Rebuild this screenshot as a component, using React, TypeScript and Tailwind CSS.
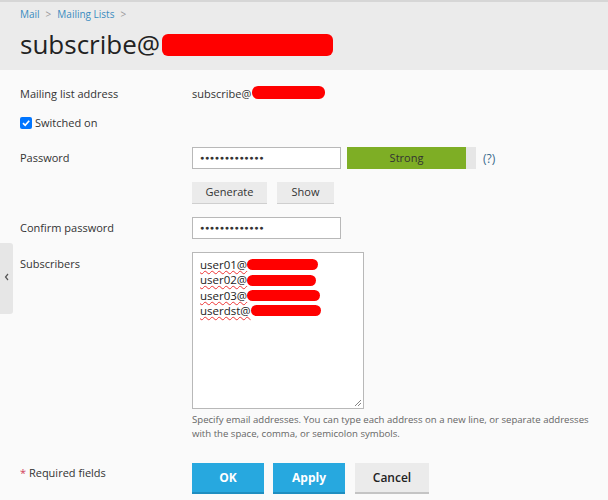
import React from "react";

const Redact = ({ className }: { className: string }) => (
  <span className={`inline-block bg-[#ff0000] rounded-[6px] align-middle ${className}`} />
);

export default function App() {
  const font = { fontFamily: '"Open Sans", "Liberation Sans", sans-serif' };
  return (
    <div className="w-[608px] h-[500px] bg-[#fafafa] text-[#333] relative overflow-hidden" style={font}>
      {/* page header */}
      <div className="h-[70px] bg-[#ebebeb] border-t-2 border-[#d6d6d6] pl-5 pt-[5px]">
        <div className="flex items-center text-[10px] text-[#3a8cc0] h-[14px]">
          <span>Mail</span>
          <span className="mx-[6px] text-[#999] text-[10px]">&gt;</span>
          <span>Mailing Lists</span>
          <span className="mx-[6px] text-[#999] text-[10px]">&gt;</span>
        </div>
        <div className="flex items-center mt-[7px] h-[32px]">
          <span className="text-[26px] leading-[32px] text-[#222]">subscribe@</span>
          <Redact className="w-[171px] h-[22px] ml-[2px] mt-[2px]" />
        </div>
      </div>

      {/* collapse tab */}
      <div className="absolute left-0 top-[243px] w-[13px] h-[71px] bg-[#e6e6e6] rounded-r-[3px] flex items-center justify-center">
        <svg width="6" height="8" viewBox="0 0 6 8" className="mt-[-4px]">
          <path d="M4 1 L1.5 4 L4 7" stroke="#555" strokeWidth="1.2" fill="none" />
        </svg>
      </div>

      <div className="pl-5 text-[11px]">
        <div className="flex items-center h-[18px] mt-[15px]">
          <div className="w-[172px]">Mailing list address</div>
          <div className="flex items-center">
            <span>subscribe@</span>
            <Redact className="w-[73px] h-[13px] ml-[1px] mt-[-4px]" />
          </div>
        </div>

        <div className="flex items-center h-[18px] mt-[11px]">
          <span className="w-[12px] h-[12px] rounded-[2px] bg-[#0075ff] flex items-center justify-center">
            <svg width="10" height="10" viewBox="0 0 10 10">
              <path d="M2 5.2 L4.2 7.3 L8.2 2.8" stroke="#fff" strokeWidth="1.7" fill="none" />
            </svg>
          </span>
          <span className="ml-[3px]">Switched on</span>
        </div>

        <div className="flex items-center h-[22px] mt-[15px]">
          <div className="w-[172px]">Password</div>
          <div className="w-[149px] h-[22px] border border-[#b8b8b8] bg-white flex items-center px-[7px] text-[7px] tracking-[0.7px]">
            ●●●●●●●●●●●●●
          </div>
          <div className="ml-[6px] w-[129px] h-[22px] bg-[#e6e6e6] flex">
            <div className="w-[119px] h-full bg-[#7eae25] flex items-center justify-center text-[11px] text-[#333]">Strong</div>
          </div>
          <span className="ml-[7px] text-[12px] text-[#3a6a8c] mt-[2px]">(?)</span>
        </div>

        <div className="flex items-center mt-[13px] ml-[172px] gap-[10px]">
          <button className="w-[75px] h-[22px] bg-[#ebebeb] border-b border-[#cfcfcf] text-[11px] text-[#333]">Generate</button>
          <button className="w-[57px] h-[22px] bg-[#ebebeb] border-b border-[#cfcfcf] text-[11px] text-[#333]">Show</button>
        </div>

        <div className="flex items-center h-[22px] mt-[13px]">
          <div className="w-[172px]">Confirm password</div>
          <div className="w-[149px] h-[22px] border border-[#b8b8b8] bg-white flex items-center px-[7px] text-[7px] tracking-[0.7px]">
            ●●●●●●●●●●●●●
          </div>
        </div>

        <div className="flex mt-[13px]">
          <div className="w-[172px] pt-[4px]">Subscribers</div>
          <div>
            <div className="relative w-[172px] h-[157px] border border-[#b8b8b8] bg-white pl-[7px] pt-[4px] text-[11.5px] leading-[15.4px] text-[#222]">
              {[
                ["user01@", "w-[71px]"],
                ["user02@", "w-[69px]"],
                ["user03@", "w-[73px]"],
                ["userdst@", "w-[70px]"],
              ].map(([u, w]) => (
                <div key={u} className="flex items-center h-[15.4px]">
                  <span className="underline decoration-wavy decoration-[#e33] decoration-1 underline-offset-[1px]">{u}</span>
                  <Redact className={`${w} h-[11px]`} />
                </div>
              ))}
              <svg width="8" height="8" viewBox="0 0 8 8" className="absolute right-[1px] bottom-[1px]">
                <path d="M7 1 L1 7 M7 4 L4 7" stroke="#777" strokeWidth="0.9" />
              </svg>
            </div>
            <div className="w-[402px] text-[9.6px] leading-[14px] text-[#666] mt-[4px]">
              Specify email addresses. You can type each address on a new line, or separate addresses with the space, comma, or semicolon symbols.
            </div>
          </div>
        </div>

        <div className="flex items-center mt-[22px]">
          <div className="w-[172px] text-[11px] text-[#333] mt-[-10px]">
            <span className="text-[#d0405a]">*</span> Required fields
          </div>
          <button className="w-[72px] h-[31px] bg-[#27a8df] border-b-2 border-[#1f8ec0] text-white font-bold text-[12px]">OK</button>
          <button className="ml-[9px] w-[72px] h-[31px] bg-[#27a8df] border-b-2 border-[#1f8ec0] text-white font-bold text-[12px]">Apply</button>
          <button className="ml-[10px] w-[74px] h-[31px] bg-[#ebebeb] border-b-2 border-[#c4c4c4] text-[#222] font-semibold text-[12px]">Cancel</button>
        </div>
      </div>
    </div>
  );
}
